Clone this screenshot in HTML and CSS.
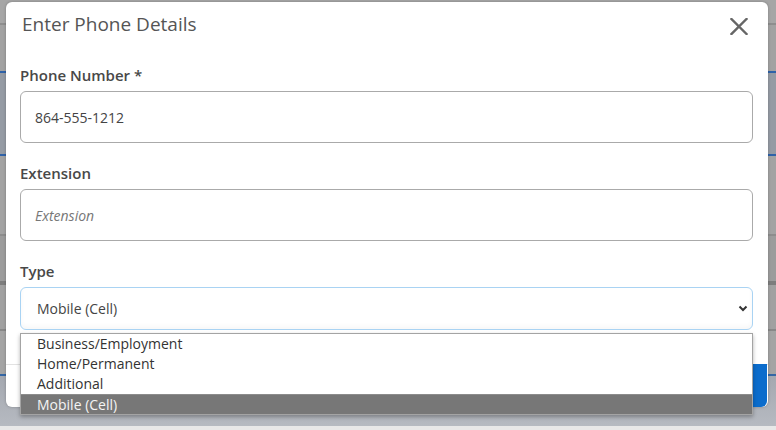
FILE: index.html
```html
<!DOCTYPE HTML>
<html>
<head>
  <title>Enter Phone Details</title>
  <link rel="stylesheet" href="styles.css">
</head>
<body>
<div class="modal">
  <div class="modal-header">
    <h2 class="modal-title">Enter Phone Details</h2>
    <button class="close" aria-label="Close">
      <svg width="18" height="17" viewBox="0 0 18 17">
        <path d="M1.5 1 L16.5 16 M16.5 1 L1.5 16" stroke="#666" stroke-width="2.4" stroke-linecap="square" fill="none"/>
      </svg>
    </button>
  </div>
  <div class="modal-body">
    <label class="field-label">Phone Number *</label>
    <input class="field-input" type="text" value="864-555-1212">

    <label class="field-label">Extension</label>
    <input class="field-input" type="text" placeholder="Extension">

    <label class="field-label">Type</label>
    <div class="select-box">
      <span class="select-value">Mobile (Cell)</span>
      <svg class="chevron" width="10" height="7" viewBox="0 0 10 7">
        <path d="M1.5 1.5 L5 5 L8.5 1.5" stroke="#333" stroke-width="2" fill="none"/>
      </svg>
      <ul class="select-list">
        <li>Business/Employment</li>
        <li>Home/Permanent</li>
        <li>Additional</li>
        <li class="selected">Mobile (Cell)</li>
      </ul>
    </div>
  </div>
  <div class="modal-footer">
    <button class="btn-primary">Save</button>
  </div>
</div>
</body>
</html>
```

FILE: styles.css
```css
html, body {
  margin: 0;
  height: 430px;
  overflow: hidden;
}

body {
  font-family: "Open Sans", "Liberation Sans", sans-serif;
  padding-top: 2px;
  box-sizing: border-box;
  background: linear-gradient(to bottom,
    #a6a6a6 0, #a6a6a6 23px, #8e8e8e 23px, #8e8e8e 25px,
    #a2a2a2 25px, #a2a2a2 71px, #2f62a8 71px, #2f62a8 73px,
    #959ba4 73px, #959ba4 154px, #2f62a8 154px, #2f62a8 156px,
    #a3a3a3 156px, #a3a3a3 234px, #8d8d8d 234px, #8d8d8d 236px,
    #9c9c9c 236px, #9c9c9c 281px, #7d7d7d 281px, #7d7d7d 285px,
    #a1a1a1 285px, #a1a1a1 329px, #888888 329px, #888888 331px,
    #a4a4a4 331px, #a4a4a4 374px, #3466a5 374px, #3466a5 376px,
    #a4a8b0 376px, #b6bac1 426px, #e8e8e8 426px, #e8e8e8 430px);
}

.modal {
  margin-left: 6px;
  width: 762px;
  height: 405px;
  background: #fff;
  border-radius: 6px;
  box-shadow: 0 0 3px rgba(0, 0, 0, 0.25);
  display: flex;
  flex-direction: column;
}

.modal-header {
  display: flex;
  justify-content: space-between;
  align-items: flex-start;
  padding: 8px 20px 0 16px;
}

.modal-title {
  margin: 0;
  font-size: 19px;
  line-height: 28px;
  font-weight: 400;
  color: #555;
}

.close {
  border: 0;
  background: none;
  padding: 0;
  margin-top: 8px;
  width: 18px;
  height: 17px;
}

.close svg {
  display: block;
}

.modal-body {
  flex: 1;
  padding: 27px 15px 0 14px;
  display: flex;
  flex-direction: column;
}

.field-label {
  font-size: 15px;
  line-height: 20px;
  font-weight: 600;
  color: #484848;
  margin-bottom: 6px;
}

.field-input {
  box-sizing: border-box;
  height: 52px;
  width: 100%;
  border: 1px solid #aaa;
  border-radius: 6px;
  padding: 0 14px;
  margin: 0 0 20px;
  font-family: inherit;
  font-size: 14px;
  color: #444;
}

.field-input::placeholder {
  font-style: italic;
  color: #777;
}

.select-box {
  position: relative;
  box-sizing: border-box;
  height: 43px;
  border: 1px solid #a9d3f3;
  border-radius: 6px;
  box-shadow: inset 0 -3px 4px rgba(0, 0, 0, 0.03);
  display: flex;
  align-items: center;
  justify-content: space-between;
  padding: 0 4px 0 16px;
  font-size: 14px;
  color: #444;
}

.chevron {
  display: block;
}

.select-list {
  position: absolute;
  top: calc(100% + 4px);
  left: -1px;
  right: -1px;
  margin: 0;
  padding: 0;
  list-style: none;
  background: #fff;
  border: 1px solid #a4a4a4;
  box-shadow: 0 2px 4px rgba(0, 0, 0, 0.3);
  z-index: 2;
}

.select-list li {
  height: 20px;
  line-height: 20px;
  padding-left: 16px;
  font-size: 14px;
  color: #333;
}

.select-list li.selected {
  background: #777;
  color: #f4f4f4;
  border-top: 1px solid #8c8c8c;
  height: 19px;
  line-height: 19px;
}

.modal-footer {
  height: 43px;
  border-top: 1px solid #e2e2e2;
  box-sizing: border-box;
  display: flex;
  justify-content: flex-end;
  padding-right: 1px;
}

.btn-primary {
  width: 110px;
  margin-top: -1px;
  border: 0;
  border-radius: 0 0 6px 0;
  background: #0b6ccc;
  color: #fff;
  font-family: inherit;
  font-size: 14px;
}
```
